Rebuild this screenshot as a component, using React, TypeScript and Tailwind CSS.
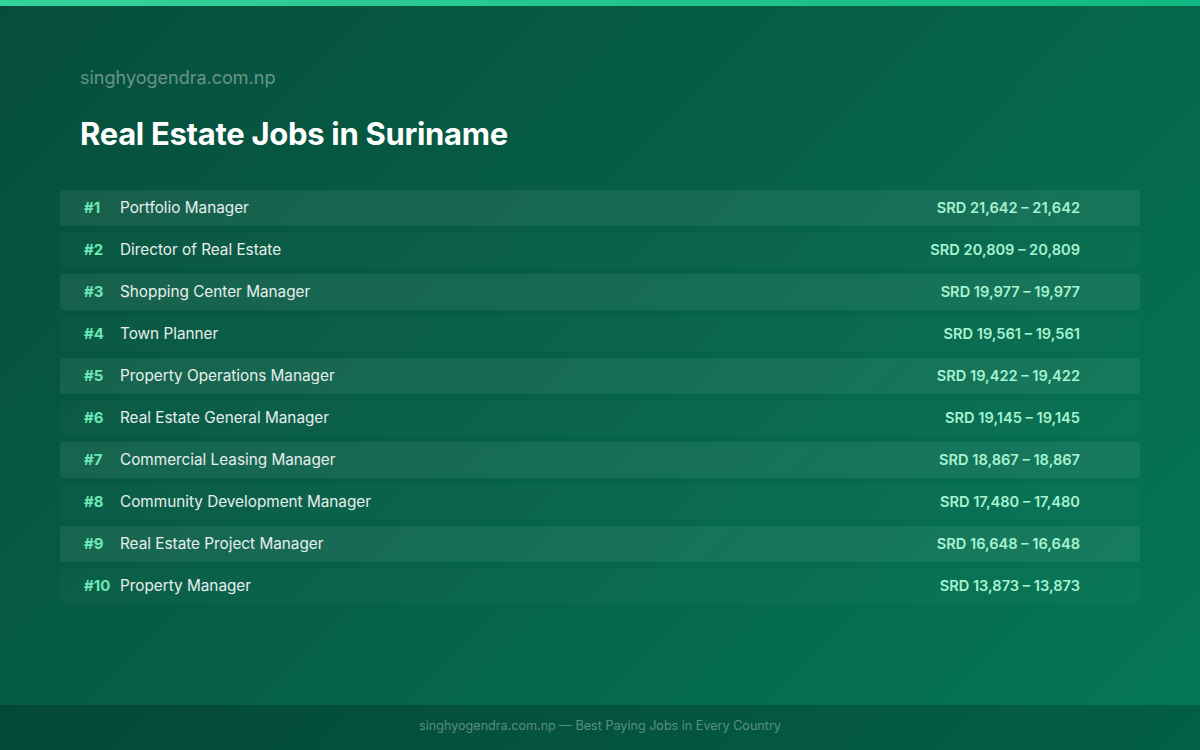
const jobs: [string, string][] = [
  ["Portfolio Manager", "SRD 21,642 – 21,642"],
  ["Director of Real Estate", "SRD 20,809 – 20,809"],
  ["Shopping Center Manager", "SRD 19,977 – 19,977"],
  ["Town Planner", "SRD 19,561 – 19,561"],
  ["Property Operations Manager", "SRD 19,422 – 19,422"],
  ["Real Estate General Manager", "SRD 19,145 – 19,145"],
  ["Commercial Leasing Manager", "SRD 18,867 – 18,867"],
  ["Community Development Manager", "SRD 17,480 – 17,480"],
  ["Real Estate Project Manager", "SRD 16,648 – 16,648"],
  ["Property Manager", "SRD 13,873 – 13,873"],
];

export default function App() {
  return (
    <div
      className="w-[1200px] h-[750px] flex flex-col bg-[linear-gradient(135deg,#064e3b_0%,#065f46_45%,#047857_100%)] text-white"
      style={{ fontFamily: "Inter, 'Noto Sans', sans-serif" }}
    >
      <div className="h-[6px] bg-[linear-gradient(90deg,#34d399,#10b981)]" />
      <div className="flex-1 flex flex-col px-[60px]">
        <div className="pl-5 pt-[59px] text-[18px] leading-[26px] text-white/40">singhyogendra.com.np</div>
        <h1 className="pl-5 mt-[25px] text-[31px] leading-[36px] font-bold tracking-[-0.3px]">Real Estate Jobs in Suriname</h1>
        <div className="mt-[38px] flex flex-col gap-[6px]">
          {jobs.map(([name, sal], i) => (
            <div
              key={i}
              className={`h-[36px] rounded-[4px] flex items-center pl-6 pr-[60px] pt-[1px] ${i % 2 === 0 ? "bg-white/[0.07]" : "bg-white/[0.025]"}`}
            >
              <span className="w-[36px] text-[15px] font-bold text-[#6ee7b7]">#{i + 1}</span>
              <span className="flex-1 text-[15.3px] text-white/90">{name}</span>
              <span className="text-[14.6px] font-semibold text-[#a7f3d0]">{sal}</span>
            </div>
          ))}
        </div>
      </div>
      <div className="h-[45px] bg-black/20 flex items-center justify-center pb-[3px] text-[12.6px] text-white/35">
        singhyogendra.com.np — Best Paying Jobs in Every Country
      </div>
    </div>
  );
}
